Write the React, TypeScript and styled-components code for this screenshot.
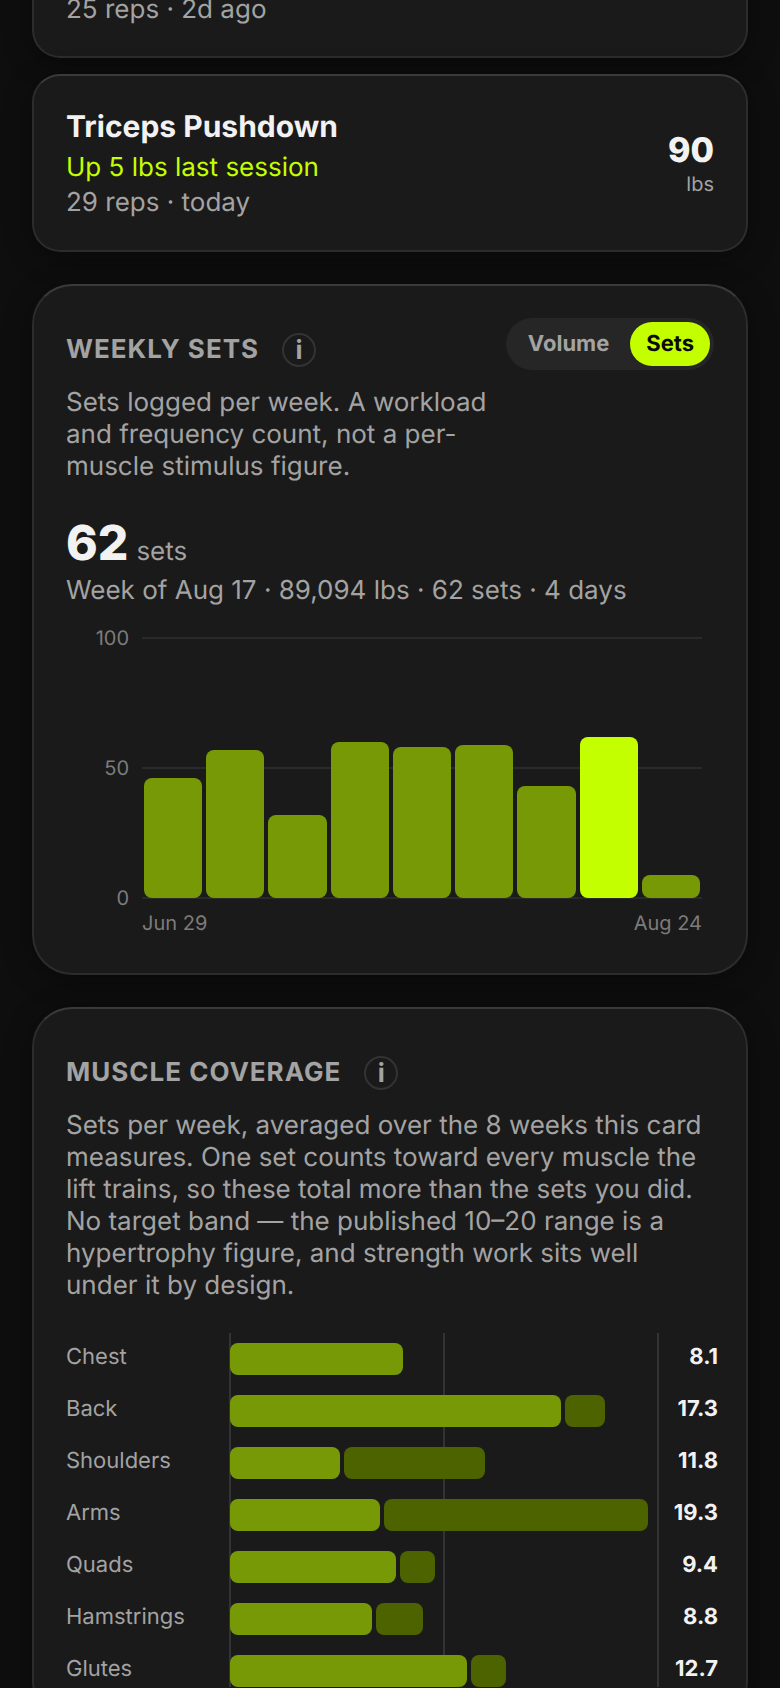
import React from "react";
import styled, { createGlobalStyle } from "styled-components";

const Global = createGlobalStyle`
  html, body { margin: 0; padding: 0; background: #0e0e0e; }
  body { font-family: Inter, "Liberation Sans", sans-serif; overflow: hidden; text-rendering: geometricPrecision; }
  * { box-sizing: border-box; }
`;

const Page = styled.div`
  height: 1688px;
  overflow: hidden;
  padding: 0 32px;
  display: flex;
  flex-direction: column;
`;

const Card = styled.section<{ $big?: boolean }>`
  flex: none;
  background: #1a1a1a;
  border: 2px solid #2c2c2c;
  border-top-color: #3a3a3a;
  border-radius: ${(p) => (p.$big ? 40 : 28)}px;
  padding: 32px;
  box-shadow: 0 6px 28px rgba(0, 0, 0, 0.35);
`;

const LiftCard = styled(Card)<{ $first?: boolean }>`
  margin-top: ${(p) => (p.$first ? -40 : 16)}px;
  padding-bottom: ${(p) => (p.$first ? 30 : 31)}px;
  display: flex;
  align-items: center;
  justify-content: space-between;
`;

const LiftInfo = styled.div`
  display: flex;
  flex-direction: column;
`;

const LiftName = styled.div`
  font-size: 30px;
  line-height: 38px;
  font-weight: 700;
  color: #f2f2f2;
`;

const LiftTrend = styled.div`
  margin-top: 6px;
  font-size: 26px;
  line-height: 32px;
  color: #c4ff00;
`;

const LiftMeta = styled.div<{ $spaced?: boolean }>`
  margin-top: ${(p) => (p.$spaced ? 3 : 0)}px;
  font-size: 26px;
  line-height: 32px;
  color: #a3a3a3;
`;

const LiftLoad = styled.div`
  display: flex;
  flex-direction: column;
  align-items: flex-end;
`;

const LoadValue = styled.div`
  font-size: 34px;
  line-height: 40px;
  font-weight: 800;
  color: #f2f2f2;
`;

const LoadUnit = styled.div`
  font-size: 20px;
  line-height: 26px;
  color: #a3a3a3;
`;

const SectionCard = styled(Card)`
  margin-top: 32px;
`;

const CardHeader = styled.div`
  display: flex;
  align-items: flex-start;
  gap: 8px;
`;

const HeaderText = styled.div`
  flex: 1;
  min-width: 0;
  padding-top: 15px;
`;

const TitleRowWrap = styled.div`
  padding-top: 15px;
`;

const TitleRow = styled.div`
  display: flex;
  align-items: center;
  gap: 23px;
`;

const Title = styled.h2`
  margin: 0;
  font-size: 26px;
  line-height: 34px;
  font-weight: 700;
  letter-spacing: 1px;
  color: #a3a3a3;
`;

const InfoBadge = styled.span`
  width: 34px;
  height: 34px;
  border: 2px solid #333;
  border-radius: 50%;
  display: flex;
  align-items: center;
  justify-content: center;
  font-size: 26px;
  font-weight: 700;
  color: #a3a3a3;
`;

const Description = styled.p`
  margin: 20px 0 0;
  font-size: 26px;
  line-height: 32px;
  color: #a3a3a3;
`;

const Toggle = styled.div`
  flex: none;
  height: 52px;
  padding: 4px;
  gap: 3px;
  display: flex;
  border-radius: 26px;
  background: #262626;
`;

const ToggleOption = styled.div<{ $active?: boolean }>`
  height: 44px;
  padding: 0 ${(p) => (p.$active ? 16 : 18)}px;
  display: flex;
  align-items: center;
  border-radius: 22px;
  font-size: 22px;
  font-weight: 700;
  color: ${(p) => (p.$active ? "#0a0a0a" : "#a3a3a3")};
  background: ${(p) => (p.$active ? "#c4ff00" : "transparent")};
`;

const Headline = styled.div`
  margin-top: 30px;
  margin-bottom: 2px;
  display: flex;
  align-items: baseline;
  gap: 8px;
`;

const HeadlineValue = styled.span`
  font-size: 48px;
  line-height: 60px;
  font-weight: 800;
  color: #f2f2f2;
`;

const HeadlineUnit = styled.span`
  font-size: 26px;
  color: #a3a3a3;
`;

const HeadlineMeta = styled.div`
  font-size: 26px;
  line-height: 32px;
  color: #a3a3a3;
`;

const Chart = styled.div`
  margin-top: 30px;
  padding: 0 12px 5px 76px;
`;

const Plot = styled.div`
  height: 262px;
  display: grid;
`;

const Grid = styled.div`
  grid-area: 1 / 1;
  display: flex;
  flex-direction: column;
  justify-content: space-between;
`;

const GridLine = styled.div`
  height: 2px;
  background: #2a2a2a;
  display: flex;
  align-items: center;
  justify-content: flex-end;
`;

const AxisLabel = styled.span`
  margin-right: calc(100% + 13px);
  white-space: nowrap;
  font-size: 20px;
  color: #7c7c7c;
`;

const Bars = styled.div`
  grid-area: 1 / 1;
  display: flex;
  align-items: flex-end;
  gap: 4px;
  padding: 0 2px 1px;
`;

const WeekBar = styled.div<{ $current?: boolean }>`
  flex: 1;
  border-radius: 8px;
  background: ${(p) => (p.$current ? "#c4ff00" : "#789906")};
`;

const ChartDates = styled.div`
  margin-top: 11px;
  display: flex;
  justify-content: space-between;
  font-size: 20px;
  line-height: 26px;
  color: #7c7c7c;
`;

const Coverage = styled.div`
  position: relative;
  margin-top: 31px;
  padding-top: 10px;
  display: flex;
  flex-direction: column;
  gap: 20px;
`;

const RefLine = styled.div<{ $at: number }>`
  position: absolute;
  top: 0;
  bottom: 0;
  left: ${(p) => p.$at}px;
  width: 2px;
  margin-left: -1px;
  background: #333;
`;

const MuscleRow = styled.div`
  position: relative;
  display: grid;
  grid-template-columns: 164px 428px 1fr;
  align-items: center;
  height: 32px;
`;

const MuscleName = styled.div`
  font-size: 22px;
  line-height: 28px;
  margin-top: -4px;
  color: #a3a3a3;
`;

const Segments = styled.div`
  display: flex;
  gap: 4px;
  height: 32px;
`;

const Segment = styled.div<{ $secondary?: boolean }>`
  flex: none;
  height: 32px;
  border-radius: 8px;
  background: ${(p) => (p.$secondary ? "#4d6300" : "#789906")};
`;

const MuscleValue = styled.div`
  font-size: 22px;
  line-height: 28px;
  margin: -4px -4px 0 0;
  font-weight: 700;
  text-align: right;
  color: #f2f2f2;
`;

const weeks = [46, 57, 32, 60, 58, 59, 43, 62, 9];
const muscles: { name: string; value: string; primary: number; secondary: number }[] = [
  { name: "Chest", value: "8.1", primary: 173, secondary: 0 },
  { name: "Back", value: "17.3", primary: 331, secondary: 40 },
  { name: "Shoulders", value: "11.8", primary: 110, secondary: 141 },
  { name: "Arms", value: "19.3", primary: 150, secondary: 264 },
  { name: "Quads", value: "9.4", primary: 166, secondary: 35 },
  { name: "Hamstrings", value: "8.8", primary: 142, secondary: 47 },
  { name: "Glutes", value: "12.7", primary: 237, secondary: 35 },
];

const Info = () => <InfoBadge>i</InfoBadge>;

export default function App() {
  return (
    <Page>
      <Global />
      <LiftCard $first>
        <LiftInfo>
          <LiftMeta>25 reps · 2d ago</LiftMeta>
        </LiftInfo>
      </LiftCard>
      <LiftCard>
        <LiftInfo>
          <LiftName>Triceps Pushdown</LiftName>
          <LiftTrend>Up 5 lbs last session</LiftTrend>
          <LiftMeta $spaced>29 reps · today</LiftMeta>
        </LiftInfo>
        <LiftLoad>
          <LoadValue>90</LoadValue>
          <LoadUnit>lbs</LoadUnit>
        </LiftLoad>
      </LiftCard>

      <SectionCard $big>
        <CardHeader>
          <HeaderText>
            <TitleRow>
              <Title>WEEKLY SETS</Title>
              <Info />
            </TitleRow>
            <Description>
              Sets logged per week. A workload and frequency count, not a per-muscle stimulus figure.
            </Description>
          </HeaderText>
          <Toggle>
            <ToggleOption>Volume</ToggleOption>
            <ToggleOption $active>Sets</ToggleOption>
          </Toggle>
        </CardHeader>
        <Headline>
          <HeadlineValue>62</HeadlineValue>
          <HeadlineUnit>sets</HeadlineUnit>
        </Headline>
        <HeadlineMeta>Week of Aug 17 · 89,094 lbs · 62 sets · 4 days</HeadlineMeta>
        <Chart>
          <Plot>
            <Grid>
              {[100, 50, 0].map((n) => (
                <GridLine key={n}>
                  <AxisLabel>{n}</AxisLabel>
                </GridLine>
              ))}
            </Grid>
            <Bars>
              {weeks.map((w, i) => (
                <WeekBar key={i} $current={i === 7} style={{ height: w * 2.6 }} />
              ))}
            </Bars>
          </Plot>
          <ChartDates>
            <span>Jun 29</span>
            <span>Aug 24</span>
          </ChartDates>
        </Chart>
      </SectionCard>

      <SectionCard $big>
        <TitleRowWrap>
          <TitleRow>
            <Title>MUSCLE COVERAGE</Title>
            <Info />
          </TitleRow>
        </TitleRowWrap>
        <Description>
          Sets per week, averaged over the 8 weeks this card measures. One set counts toward every muscle the lift
          trains, so these total more than the sets you did. No target band — the published 10–20 range is a
          hypertrophy figure, and strength work sits well under it by design.
        </Description>
        <Coverage>
          <RefLine $at={164} />
          <RefLine $at={378} />
          <RefLine $at={592} />
          {muscles.map((m) => (
            <MuscleRow key={m.name}>
              <MuscleName>{m.name}</MuscleName>
              <Segments>
                <Segment style={{ width: m.primary }} />
                {m.secondary > 0 && <Segment $secondary style={{ width: m.secondary }} />}
              </Segments>
              <MuscleValue>{m.value}</MuscleValue>
            </MuscleRow>
          ))}
        </Coverage>
      </SectionCard>
    </Page>
  );
}
